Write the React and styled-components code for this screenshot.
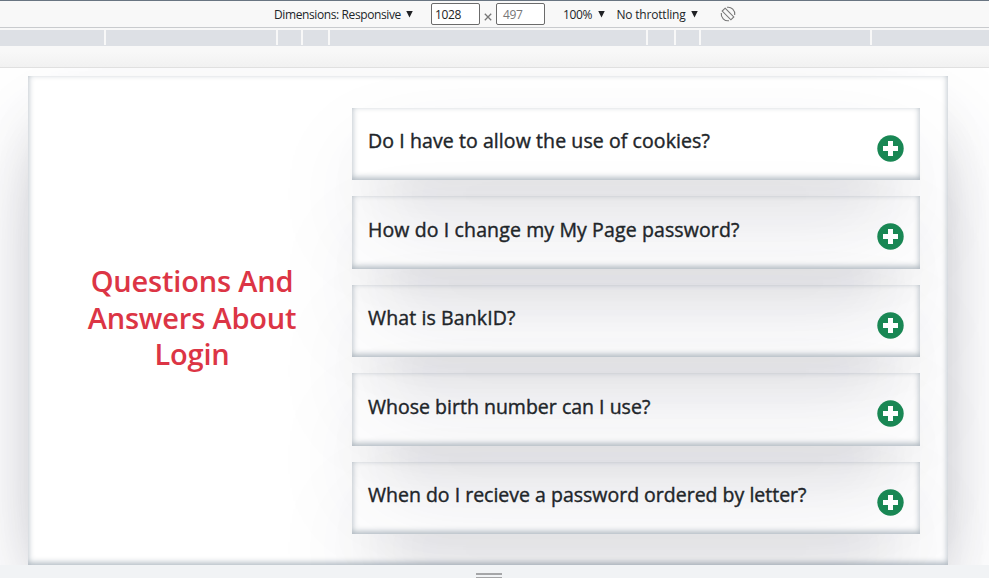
import React from "react";
import styled, { createGlobalStyle } from "styled-components";

const GlobalStyle = createGlobalStyle`
  * { box-sizing: border-box; }
  body { margin: 0; overflow: hidden; background: #fff; }
`;

const Window = styled.div`
  width: 989px;
  height: 578px;
  display: flex;
  flex-direction: column;
  overflow: hidden;
  font-family: "Open Sans", "Noto Sans", sans-serif;
  color: #212529;
`;

const Toolbar = styled.header`
  flex: none;
  height: 28px;
  display: flex;
  align-items: center;
  padding-left: 274px;
  background: #f8f8f8;
  border-top: 1px solid #697582;
  border-bottom: 1px solid #c9cbce;
  font-size: 12px;
  line-height: 16px;
  white-space: nowrap;
`;

const ToolLabel = styled.span`
  width: ${(p) => p.$width}px;
  flex: none;
  letter-spacing: ${(p) => p.$spacing || 0}px;
  padding-top: 1px;
`;

const Gap = styled.span`
  flex: none;
  width: ${(p) => p.$width}px;
`;

const Caret = styled.i`
  flex: none;
  width: 7px;
  height: 7px;
  margin-left: ${(p) => p.$gap}px;
  background: #202124;
  clip-path: polygon(0 0, 100% 0, 50% 100%);
`;

const SizeField = styled.span`
  flex: none;
  width: 49px;
  height: 22px;
  padding-left: ${(p) => (p.$muted ? 6 : 3)}px;
  border: 1px solid #6b6b6b;
  border-radius: 2px;
  background: #fff;
  color: ${(p) => (p.$muted ? "#777" : "#222")};
  line-height: 21px;
  letter-spacing: -0.4px;
`;

const Times = styled.svg`
  flex: none;
  width: 8px;
  height: 8px;
  margin: 5px 4px 0;
`;

const RotateIcon = styled.svg`
  flex: none;
  width: 16px;
  height: 16px;
  margin-left: 22px;
`;

const Ruler = styled.div`
  flex: none;
  height: 40px;
  padding-top: 2px;
  background: linear-gradient(#f8f8f8 18px, #f8f8f8 24px, #f1f1f1 39px);
  border-bottom: 1px solid #e0e0e0;
`;

const Breakpoints = styled.div`
  display: grid;
  grid-template-columns: 104px 170px 23px 25px 316px 26px 23px 169px 1fr;
  column-gap: 2px;
  height: 16px;
  border-bottom: 1px solid #dde0e5;
`;

const Segment = styled.span`
  background: #dde0e5;
`;

const Viewport = styled.main`
  flex: none;
  height: 497px;
  padding: 8px 41px 0 28px;
  overflow: hidden;
  background: #fff;
`;

const raised = `
  box-shadow: rgba(50, 50, 93, 0.25) 0 50px 100px -20px,
    rgba(0, 0, 0, 0.3) 0 30px 60px -30px,
    rgba(10, 37, 64, 0.35) 0 -2px 6px 0 inset;
`;

const Card = styled.section`
  height: 489px;
  display: flex;
  padding: 32px 28px 0 52px;
  ${raised}
`;

const Title = styled.h1`
  width: 224px;
  margin: 155px 48px 0 0;
  color: #dc3545;
  font-size: 29px;
  font-weight: 600;
  line-height: 36.6px;
  letter-spacing: -0.18px;
  text-align: center;
  white-space: nowrap;
`;

const Questions = styled.div`
  flex: 1;
  display: flex;
  flex-direction: column;
  gap: 16px;
`;

const Question = styled.article`
  height: 72.4px;
  display: flex;
  justify-content: space-between;
  padding: 21.4px 16px 0;
  ${raised}
`;

const QuestionText = styled.h2`
  margin: 0;
  font-size: 19.5px;
  font-weight: 500;
  line-height: 24px;
  letter-spacing: ${(p) => p.$spacing}px;
  white-space: nowrap;
  -webkit-text-stroke: 0.4px currentColor;
`;

const PlusIcon = styled.svg`
  width: 27px;
  height: 27px;
  margin-top: 5.6px;
`;

const ResizeBar = styled.footer`
  flex: none;
  height: 13px;
  display: flex;
  flex-direction: column;
  align-items: center;
  gap: 2px;
  padding-top: 8px;
  padding-right: 11px;
  background: #f1f3f5;
`;

const Grip = styled.span`
  flex: none;
  width: 26px;
  height: 2px;
  background: #a5a6a8;
`;

const questions = [
  { text: "Do I have to allow the use of cookies?", spacing: 0.09 },
  { text: "How do I change my My Page password?", spacing: 0.12 },
  { text: "What is BankID?", spacing: 0.12 },
  { text: "Whose birth number can I use?", spacing: 0.01 },
  { text: "When do I recieve a password ordered by letter?", spacing: 0 },
];

export default function App() {
  return (
    <>
      <GlobalStyle />
      <Window>
        <Toolbar>
          <ToolLabel $width={127} $spacing={-0.39}>Dimensions: Responsive</ToolLabel>
          <Caret $gap={5} />
          <Gap $width={18} />
          <SizeField>1028</SizeField>
          <Times viewBox="0 0 8 8" stroke="#777" strokeWidth="1.3">
            <path d="M.8.8 7.2 7.2M7.2.8.8 7.2" />
          </Times>
          <SizeField $muted>497</SizeField>
          <Gap $width={18} />
          <ToolLabel $width={30} $spacing={-0.4}>100%</ToolLabel>
          <Caret $gap={5} />
          <Gap $width={11.5} />
          <ToolLabel $width={70} $spacing={-0.2}>No throttling</ToolLabel>
          <Caret $gap={4.5} />
          <RotateIcon viewBox="0 0 16 16" fill="none" stroke="#777" strokeWidth="1.1">
            <path d="M5.1 2.2 13.8 10.9 10.9 13.8 2.2 5.1Z" />
            <path d="M7 1.3A6.8 6.8 0 0 1 14.7 9M9 14.7A6.8 6.8 0 0 1 1.3 7" />
          </RotateIcon>
        </Toolbar>
        <Ruler>
          <Breakpoints>
            {Array.from({ length: 9 }, (_, i) => <Segment key={i} />)}
          </Breakpoints>
        </Ruler>
        <Viewport>
          <Card>
            <Title>Questions And<br />Answers About<br />Login</Title>
            <Questions>
              {questions.map((q) => (
                <Question key={q.text}>
                  <QuestionText $spacing={q.spacing}>{q.text}</QuestionText>
                  <PlusIcon viewBox="0 0 27 27">
                    <circle cx="13.5" cy="13.5" r="13.2" fill="#198754" />
                    <path d="M11 6h5v5h5v5h-5v5h-5v-5H6v-5h5z" fill="#fff" />
                  </PlusIcon>
                </Question>
              ))}
            </Questions>
          </Card>
        </Viewport>
        <ResizeBar>
          <Grip />
          <Grip />
        </ResizeBar>
      </Window>
    </>
  );
}
